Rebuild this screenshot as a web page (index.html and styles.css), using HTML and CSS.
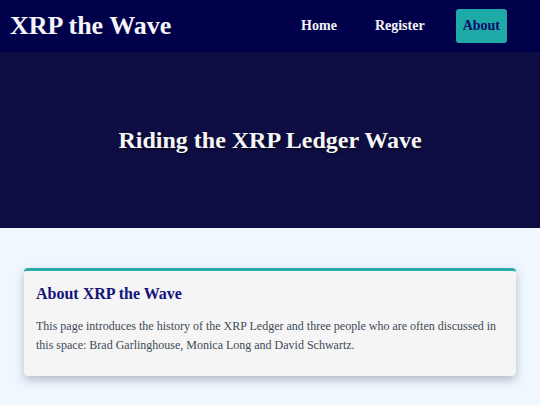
FILE: index.html
```html
<!DOCTYPE html>
<html>
<head>
<meta charset="utf-8">
<link rel="stylesheet" href="styles.css">
</head>
<body>
<header class="topbar">
  <div class="brand">XRP the Wave</div>
  <nav class="nav">
    <a class="nav-link">Home</a>
    <a class="nav-link">Register</a>
    <a class="nav-link active">About</a>
  </nav>
</header>
<section class="hero">
  <h1 class="hero-title">Riding the XRP Ledger Wave</h1>
</section>
<main class="content">
  <div class="card">
    <h2 class="card-title">About XRP the Wave</h2>
    <p class="card-text">This page introduces the history of the XRP Ledger and three people who are often discussed in this space: Brad Garlinghouse, Monica Long and David Schwartz.</p>
  </div>
</main>
</body>
</html>
```
FILE: styles.css
```css
* { box-sizing: border-box; }
html, body { margin: 0; padding: 0; }
body {
  font-family: "Liberation Serif", "DejaVu Serif", serif;
  background: #f0f7fe;
  width: 540px;
  height: 405px;
  overflow: hidden;
}
.topbar {
  height: 52px;
  background: #00004a;
  display: flex;
  align-items: center;
  justify-content: space-between;
  padding: 0 33px 0 10px;
}
.brand {
  color: #f4f4f8;
  font-size: 26px;
  font-weight: bold;
}
.nav {
  display: flex;
  align-items: center;
  gap: 12px;
}
.nav-link {
  color: #f4f4f8;
  font-size: 14px;
  font-weight: bold;
  padding: 8px 7px;
  border-radius: 3px;
  margin-left: 12px;
}
.nav-link.active {
  background: #1eaaa6;
  color: #0b0b6a;
  padding: 9px 7px;
}
.hero {
  height: 176px;
  background: #0e0e45;
  display: flex;
  align-items: center;
  justify-content: center;
}
.hero-title {
  margin: 0;
  color: #f6f6f6;
  font-size: 24px;
  font-weight: bold;
  text-shadow: 1px 2px 3px rgba(0,0,0,0.5);
}
.content {
  padding: 40px 24px 0 24px;
}
.card {
  background: #f5f5f5;
  border-top: 3px solid #2aaba8;
  border-radius: 4px;
  box-shadow: 0 4px 10px rgba(60,80,110,0.35);
  padding: 14px 12px 21px 12px;
}
.card-title {
  margin: 0 0 14px 0;
  color: #12127a;
  font-size: 16px;
  font-weight: bold;
}
.card-text {
  margin: 0;
  color: #3e4a56;
  font-size: 12px;
  line-height: 19px;
}
```
